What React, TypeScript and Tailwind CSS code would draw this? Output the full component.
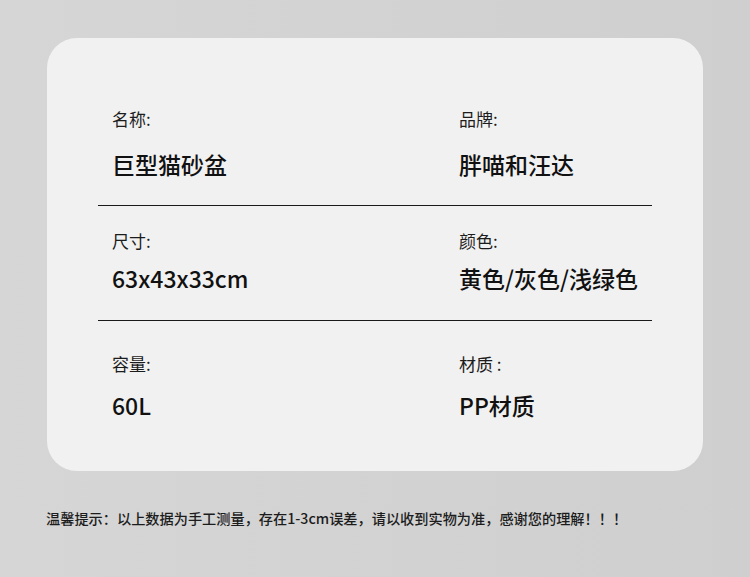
import React from "react";

const font = { fontFamily: '"Noto Sans CJK SC", "Noto Sans", sans-serif' };

function Cell({ label, value, gap }: { label: string; value: string; gap: string }) {
  return (
    <div className="flex flex-col">
      <div className="text-[17px] leading-[24px] text-[#1c1c1c]">{label}</div>
      <div className={`text-[23px] leading-[32px] text-[#111] font-medium ${gap}`}>{value}</div>
    </div>
  );
}

export default function App() {
  return (
    <div
      className="w-[750px] h-[577px] bg-gradient-to-r from-[#d6d6d6] to-[#cfcfcf] pt-[38px] px-[47px] overflow-hidden"
      style={font}
    >
      <div className="h-[433px] rounded-[30px] bg-[#f1f1f1] px-[51px] flex flex-col">
        <div className="grid grid-cols-[347px_1fr] pl-[14px] pt-[69px] pb-[25px] border-b-[1.5px] border-[#1a1a1a]">
          <Cell label="名称:" value="巨型猫砂盆" gap="mt-[17px]" />
          <Cell label="品牌:" value="胖喵和汪达" gap="mt-[17px]" />
        </div>
        <div className="grid grid-cols-[347px_1fr] pl-[14px] pt-[23px] pb-[26px] border-b-[1.5px] border-[#1a1a1a]">
          <Cell label="尺寸:" value="63x43x33cm" gap="mt-[9px]" />
          <Cell label="颜色:" value="黄色/灰色/浅绿色" gap="mt-[9px]" />
        </div>
        <div className="grid grid-cols-[347px_1fr] pl-[14px] pt-[31px]">
          <Cell label="容量:" value="60L" gap="mt-[13px]" />
          <Cell label="材质 :" value="PP材质" gap="mt-[13px]" />
        </div>
      </div>
      <div className="mt-[37px] -ml-[1px] text-[14.2px] leading-[20px] text-[#1c1c1c] font-medium whitespace-nowrap">
        温馨提示：以上数据为手工测量，存在1-3cm误差，请以收到实物为准，感谢您的理解！！！
      </div>
    </div>
  );
}
